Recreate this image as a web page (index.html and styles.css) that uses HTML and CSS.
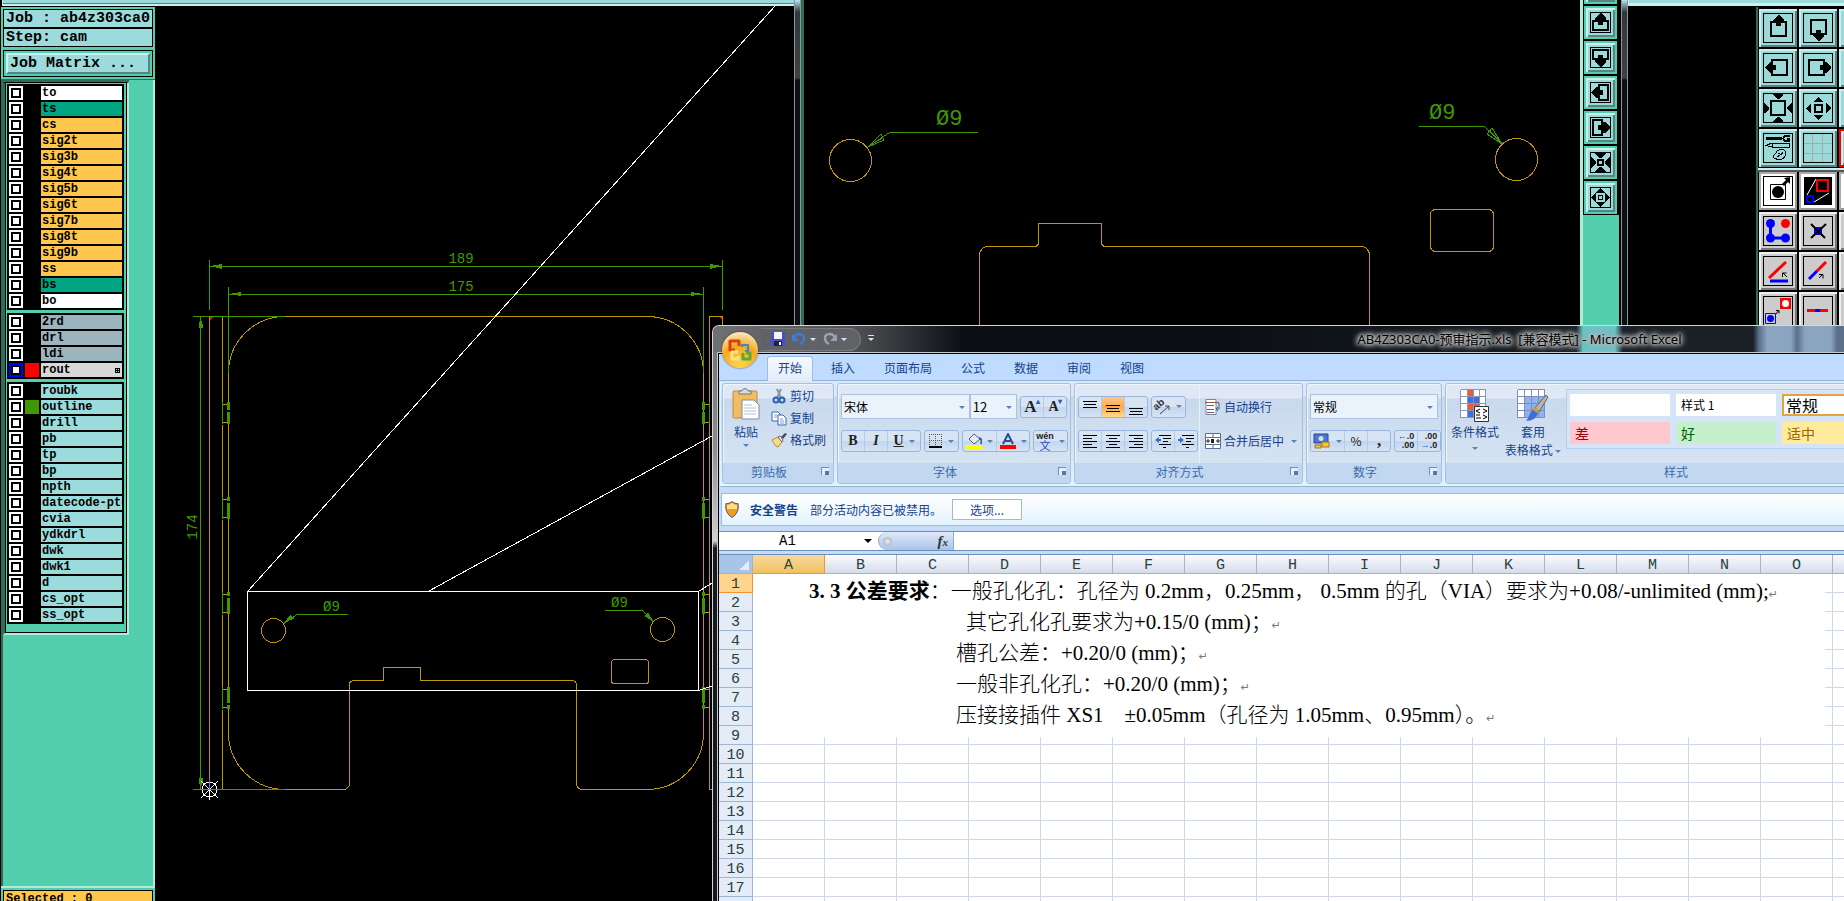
FILE: index.html
```html
<!DOCTYPE html>
<html lang="zh-CN">

<head>
    <meta charset="UTF-8">
    <meta name="viewport" content="width=device-width, initial-scale=1.0">
    <title>AB4Z303CA0-预审指示.xls - Microsoft Excel</title>
    <link rel="stylesheet" href="styles.css">
</head>

<body>
    <div class="desktop">

        <!-- Main CAM editor window -->
        <section class="cam cam-main">
            <div class="cam-strip"></div>
            <div class="cam-content">
                <aside class="job-panel">
                    <header class="job-head">
                        <div class="job-line">Job : ab4z303ca0</div>
                        <div class="job-line">Step: cam</div>
                        <div class="matrix-box">
                            <button type="button" class="matrix-btn">Job Matrix ...</button>
                        </div>
                    </header>
                    <div class="layer-area">
                        <div class="layer-list" id="layer-list">
                            <!-- Layer groups are added by the script -->
                        </div>
                    </div>
                    <footer class="job-foot">
                        <div class="selected-line">Selected : 0</div>
                    </footer>
                </aside>

                <svg class="drawing" width="639" height="895" viewBox="155 6 639 895">
                    <g class="tan">
                        <path d="M209.5 789.5V316.5H222.5V402.5M222.5 424.5V497.5M222.5 519.5V592.5M222.5 614.5V687.5M222.5 709.5V789.5" />
                        <path d="M285 316.5H647M285 316.5A56.5 56.5 0 0 0 228.5 373V402M228.5 424V497M228.5 519V592M228.5 614V687M228.5 709V733A56.5 56.5 0 0 0 285 789.5H343.5A6 6 0 0 0 349.5 783.5V684.5A4 4 0 0 1 353.5 680.5H383.5V667.5H420.5V680.5H572.5A4 4 0 0 1 576.5 684.5V783.5A6 6 0 0 0 582.5 789.5H647A56.5 56.5 0 0 0 703.5 733V373A56.5 56.5 0 0 0 647 316.5" />
                        <path d="M722.5 325V316.5H709.5V789.5H712" />
                        <path d="M222 402v2h6v-2M222 424v-2h6v2M222 497v2h6v-2M222 519v-2h6v2M222 592v2h6v-2M222 614v-2h6v2M222 687v2h6v-2M222 709v-2h6v2" />
                        <path d="M704 404h5v-2M704 422h5v2M704 499h5v-2M704 517h5v2M704 594h5v-2M704 612h5v2M704 689h5v-2M704 707h5v2" />
                        <circle cx="273.5" cy="630.5" r="12" />
                        <circle cx="662.5" cy="629.5" r="12" />
                        <rect x="611.5" y="659.5" width="37" height="24" rx="3" />
                    </g>
                    <g class="green">
                        <path d="M209.5 260V310M722.5 260V310M209.5 266.5H722.5M228.5 287V373M703.5 287V373M228.5 294.5H703.5" />
                        <path d="M193 316.5H285M193 789.5H285M200.5 316.5V789.5" />
                        <path d="M222.5 402V424M222.5 497V519M222.5 592V614M222.5 687V709M709.5 402V424M709.5 497V519" />
                        <path d="M347.5 614.5H297L284 623.5M605 610.5H642.5L653 621.5" />
                        <path class="arrow" d="M210 266l12-2v5zM722 266l-12-2v5zM229 294l12-2v4zM703 294l-12-2v4zM200.5 317l-2 11h5zM200.5 789l-2-11h5zM284 623l6-8 5 3zM653 621l-9-5 4-4z" />
                        <path class="tab" d="M228.5 402v8m0 2v12M228.5 497v4m0 2v16M228.5 592v4m0 2v16M228.5 687v16m0 2v4M703.5 402v8m0 2v12M703.5 497v4m0 2v16M703.5 592v4m0 2v16M703.5 687v16m0 2v4" />
                    </g>
                    <g class="white">
                        <rect x="247.5" y="591.5" width="451" height="99" />
                        <path d="M247.5 591.5L775 6M428 591.5L712 436M698.5 591.5L712 583M698.5 690.5L712 686" />
                        <circle cx="209.5" cy="789.5" r="7.5" />
                        <path d="M209.5 779V800M201 781L218 798M218 781L201 798" />
                    </g>
                    <path class="axis" d="M199 789.5H219M209.5 779V789" />
                    <path class="red-dot" d="M210 317h3l-3 3zM722 317h-3l3 3z" />
                    <g class="dim">
                        <text x="461" y="263" text-anchor="middle">189</text>
                        <text x="461" y="291" text-anchor="middle">175</text>
                        <text transform="translate(197 527) rotate(-90)" text-anchor="middle">174</text>
                        <text x="323" y="611">Ø9</text>
                        <text x="611" y="607">Ø9</text>
                    </g>
                </svg>
            </div>
        </section>

        <!-- Zoomed CAM window -->
        <section class="cam cam-zoom">
            <div class="glass-edge"></div>
            <div class="shade-edge"></div>
            <div class="canvas">
                <svg class="drawing" width="776" height="330" viewBox="804 0 776 330">
                    <g class="tan">
                        <circle cx="850.5" cy="160.5" r="21" />
                        <circle cx="1516.5" cy="159.5" r="21" />
                        <rect x="1430.5" y="209.5" width="63" height="42" rx="5" />
                        <path d="M979.5 330V256A8 9 0 0 1 987.5 246.5H1036L1038.5 244V223.5H1101.5V244L1104 246.5H1361A8 9 0 0 1 1369.5 256V330" />
                    </g>
                    <g class="green">
                        <path d="M978 132.5H889.5L868 147M1419 126.5H1484.5L1502 144" />
                        <path d="M868 147L881 134L884 140zM868 147L882 138M1502 144L1487 134L1492 128zM1502 144L1490 131" />
                    </g>
                    <g class="dim dim-large">
                        <text x="936" y="125">Ø9</text>
                        <text x="1429" y="119">Ø9</text>
                    </g>
                </svg>
            </div>
            <div class="side-tools">
                <button type="button" class="side-btn" aria-label="blank"></button>
                <button type="button" class="side-btn" aria-label="pan up"><svg viewBox="0 0 21 21"><path class="ol" d="M3 9h15v9H3z" /><path d="M10 1h1l5 5v3h-3v4H8V9H5V6z" /></svg></button>
                <button type="button" class="side-btn" aria-label="pan down"><svg viewBox="0 0 21 21"><path class="ol" d="M3 3h15v9H3z" /><path d="M10 20h1l5-5v-3h-3V8H8v4H5v3z" /></svg></button>
                <button type="button" class="side-btn" aria-label="pan left"><svg viewBox="0 0 21 21"><path class="ol" d="M9 3h9v15H9z" /><path d="M1 10v1l5 5h3v-3h4V8H9V5H6z" /></svg></button>
                <button type="button" class="side-btn" aria-label="pan right"><svg viewBox="0 0 21 21"><path class="ol" d="M3 3h9v15H3z" /><path d="M20 10v1l-5 5h-3v-3H8V8h4V5h3z" /></svg></button>
                <button type="button" class="side-btn" aria-label="zoom out"><svg viewBox="0 0 21 21"><path class="ol" d="M8 8h5v5H8z" /><path d="M5 1h11v1l-5 4h-1L5 2zM5 20h11v-1l-5-4h-1l-5 4zM1 5v11h1l4-5v-1L2 5zM20 5v11h-1l-4-5v-1l4-5z" /></svg></button>
                <button type="button" class="side-btn" aria-label="zoom in"><svg viewBox="0 0 21 21"><path class="thin" d="M8.5 8.5h4v4h-4z" /><path d="M6 6h9l-4-5h-1zM6 15h9l-4 5h-1zM6 6v9l-5-4v-1zM15 6v9l5-4v-1z" /></svg></button>
            </div>
        </section>

        <!-- Tool palette window -->
        <section class="cam cam-tools">
            <div class="glass-edge"></div>
            <div class="tools-main">
                <div class="cam-strip plain"></div>
                <div class="palette-wrap">
                    <div class="palette">
                        <button type="button" class="tool" aria-label="pan up"><svg viewBox="0 0 30 30"><path class="ol" d="M8 9h15v14H8z" /><path d="M15 2h1l5 5v3h-3v3h-5v-3h-3V7z" /></svg></button>
                        <button type="button" class="tool" aria-label="pan down"><svg viewBox="0 0 30 30"><path class="ol" d="M8 7h15v14H8z" /><path d="M15 28h1l5-5v-3h-3v-3h-5v3h-3v3z" /></svg></button>
                        <button type="button" class="tool" aria-label="add"></button>
                        <button type="button" class="tool" aria-label="pan left"><svg viewBox="0 0 30 30"><path class="ol" d="M9 7h15v15H9z" /><path d="M2 14v1l5 5h3v-3h3v-5h-3V9H7z" /></svg></button>
                        <button type="button" class="tool" aria-label="pan right"><svg viewBox="0 0 30 30"><path class="ol" d="M6 7h15v15H6z" /><path d="M28 14v1l-5 5h-3v-3h-3v-5h3V9h3z" /></svg></button>
                        <button type="button" class="tool" aria-label="home"></button>
                        <button type="button" class="tool" aria-label="zoom out"><svg viewBox="0 0 30 30"><path class="ol" d="M8 8h14v14H8z" /><path d="M10 1h10v1l-4 4h-1l-5-4zM10 29h10v-1l-4-4h-1l-5 4zM1 10v10h1l4-4v-1l-4-5zM29 10v10h-1l-4-4v-1l4-5z" /></svg></button>
                        <button type="button" class="tool" aria-label="zoom in"><svg viewBox="0 0 30 30"><path class="ol" d="M12 12h7v7h-7z" /><path d="M10 9h10l-4-5h-1zM10 22h10l-4 5h-1zM8 10v10l-5-4v-1zM23 10v10l5-4v-1z" /></svg></button>
                        <button type="button" class="tool" aria-label="fit"></button>
                        <button type="button" class="tool" aria-label="settings"><svg viewBox="0 0 30 30"><path d="M3 4h16v3H3z" /><path class="ol" d="M27 3h-5l-2 2.5 2 2.5h5M24 5.5h3" /><path class="thin" d="M3 12.5l6-2.500h17v4H9zM9 10v4M12 26c-2-2-2-4 0-5s1-4 4-4 7-1 7 3-4 7-7 7-2-2-4-1zM15 20h2M19 19h1M14 24l6-4" /></svg></button>
                        <button type="button" class="tool" aria-label="grid"><svg viewBox="0 0 30 30"><path class="grid-lines" d="M9.5 1v28M19.5 1v28M1 10.5h28M1 20.5h28" /></svg></button>
                        <button type="button" class="tool tool-red" aria-label="stop"></button>
                    </div>
                    <div class="palette palette-gray">
                        <button type="button" class="tool lit" aria-label="measure pad"><svg viewBox="0 0 30 30"><path class="thin" d="M7.5 8.5h15v15h-15z" /><circle cx="15" cy="16" r="6" /><path d="M27 1v7l-2-2-4 4-2-2 4-4-2-2z" /></svg></button>
                        <button type="button" class="tool lit dark" aria-label="window select"><svg viewBox="0 0 30 30"><path class="w1" d="M13 3L4 19M26 17L11 26" /><path class="r2" d="M14 4h11v11H14z" /><path class="b2" d="M4 20h6v6H4z" /></svg></button>
                        <button type="button" class="tool lit" aria-label="select"></button>
                        <button type="button" class="tool" aria-label="net"><svg viewBox="0 0 30 30"><path class="b3" d="M7.5 7v15h15" /><circle class="fb" cx="7.5" cy="7.5" r="4.500" /><circle class="fb" cx="7.5" cy="22" r="4.500" /><circle class="fb" cx="22.5" cy="22" r="4.500" /><circle class="fr" cx="22.5" cy="7.5" r="4.500" /></svg></button>
                        <button type="button" class="tool" aria-label="delete point"><svg viewBox="0 0 30 30"><path class="fb" d="M11 11h8v8h-8z" /><path class="ol" d="M8 8l14 14M23 8L8 22" /></svg></button>
                        <button type="button" class="tool" aria-label="copy"></button>
                        <button type="button" class="tool" aria-label="angle"><svg viewBox="0 0 30 30"><path class="r3" d="M6 22L23 6" /><path class="b3" d="M7 25h18" /><path class="thin" d="M19.5 21v-4h4M20 17l4 4" /></svg></button>
                        <button type="button" class="tool" aria-label="split line"><svg viewBox="0 0 30 30"><path class="r3" d="M14 15l9-9" /><path class="b3" d="M6 23l8-8" /><path class="thin" d="M16 18.5h4v4M20 18l-4 4" /></svg></button>
                        <button type="button" class="tool" aria-label="join"></button>
                        <button type="button" class="tool" aria-label="replace pad"><svg viewBox="0 0 30 30"><path class="fr" d="M17 2h11v11H17z" /><circle class="fw" cx="22.5" cy="7.5" r="3.500" /><path class="b1" d="M2.5 17.5h10v10h-10z" /><circle class="fb" cx="7.5" cy="22.5" r="3.500" /><path class="thin" d="M13 14.5h3v3M16 14l-3 4" /></svg></button>
                        <button type="button" class="tool" aria-label="break line"><svg viewBox="0 0 30 30"><path class="r3" d="M4 14.5h21" /><path class="b3" d="M12 14.5h5" /></svg></button>
                        <button type="button" class="tool" aria-label="trim"></button>
                    </div>
                </div>
            </div>
        </section>

        <!-- Excel window, hangs off the right side of the desktop -->
        <section class="excel">
            <header class="titlebar">
                <div class="quick-bar">
                    <button type="button" class="qa" aria-label="保存"><svg width="14" height="14" viewBox="0 0 14 14"><path d="M0 0h13l1 1v13H0z" fill="#4a4fc0" /><path d="M3 0h8v7H3z" fill="#f2f4ff" /><path d="M3 9h8v5H3z" fill="#1a2350" /><path d="M8 10h2v3H8z" fill="#fff" /></svg></button>
                    <button type="button" class="qa" aria-label="撤消"><svg width="14" height="14" viewBox="0 0 14 14"><path d="M2 5c3-4 10-4 10 1 0 3-2 5-4 6" fill="none" stroke="#3d7bd8" stroke-width="2.500" /><path d="M0 2v7h7z" fill="#3d7bd8" /></svg><i class="caret pale"></i></button>
                    <button type="button" class="qa" aria-label="恢复"><svg width="14" height="14" viewBox="0 0 14 14"><path d="M12 5C9 1 2 1 2 6c0 3 2 5 4 6" fill="none" stroke="#98a2b0" stroke-width="2.500" /><path d="M14 2v7H7z" fill="#98a2b0" /></svg><i class="caret pale"></i></button>
                </div>
                <button type="button" class="qa-more" aria-label="自定义快速访问工具栏"><i class="caret pale"></i></button>
                <h1 class="title">AB4Z303CA0-预审指示.xls&nbsp; [兼容模式] - Microsoft Excel</h1>
            </header>
            <button type="button" class="office-btn" aria-label="Office 按钮">
                <svg width="24" height="24" viewBox="0 0 24 24" fill="none" stroke-linejoin="round">
                    <path d="M11 8V3H2v9h5" stroke="#d8400c" stroke-width="3" />
                    <path d="M14 9V7h6v6h-3" stroke="#3a87d0" stroke-width="2" />
                    <path d="M10 14H4v7h6v-3" stroke="#fbe08a" stroke-width="3" />
                    <path d="M15 15v6h7v-6h-4" stroke="#59a83c" stroke-width="3" />
                </svg>
            </button>

            <div class="client">
                <nav class="tabs">
                    <a href="#home" class="tab-link active">开始</a>
                    <a href="#insert" class="tab-link">插入</a>
                    <a href="#layout" class="tab-link">页面布局</a>
                    <a href="#formula" class="tab-link">公式</a>
                    <a href="#data" class="tab-link">数据</a>
                    <a href="#review" class="tab-link">审阅</a>
                    <a href="#view" class="tab-link">视图</a>
                </nav>

                <div class="ribbon">
                    <div class="group group-clip">
                        <div class="group-body clip-body">
                            <button type="button" class="big-btn">
                                <svg width="28" height="32" viewBox="0 0 28 32"><rect x="1" y="3" width="24" height="27" rx="1" fill="#f2bd62" stroke="#c08a3c" /><path d="M7 6V3h3c0-3 6-3 6 0h3v3z" fill="#d9dde2" stroke="#6c7480" /><path d="M10 12h12l5 5v14H10z" fill="#fff" stroke="#7e8ca6" /><path d="M12 17h8M12 20h12M12 23h12M12 26h12" stroke="#b6c2d6" /></svg>
                                <span>粘贴</span>
                                <i class="caret"></i>
                            </button>
                            <div class="clip-list">
                                <button type="button" class="text-btn"><svg width="16" height="16" viewBox="0 0 16 16" fill="none"><path d="M6 1l4 9M10 1L6 10" stroke="#8a94a6" stroke-width="2" /><circle cx="5" cy="12" r="2.500" stroke="#2f5fb0" stroke-width="2" /><circle cx="11" cy="12" r="2.500" stroke="#2f5fb0" stroke-width="2" /></svg>剪切</button>
                                <button type="button" class="text-btn"><svg width="16" height="16" viewBox="0 0 16 16" fill="#fff" stroke="#3d66a8"><path d="M1 2h6l2 2v7H1z" /><path d="M7 5h5l3 3v7H7z" /><path d="M3 5h3M3 7h3M9 9h3M9 11h4M9 13h4" stroke="#7da0d8" /></svg>复制</button>
                                <button type="button" class="text-btn"><svg width="16" height="16" viewBox="0 0 16 16"><path d="M1 8l6-3 4 5-4 5c-3-1-4-3-6-7z" fill="#f4dc8a" stroke="#b08c30" /><path d="M7 5l2-1 3 4-1 2z" fill="#fff" stroke="#666" /><path d="M10 5l4-4 2 1-4 5z" fill="#4d4466" /></svg>格式刷</button>
                            </div>
                        </div>
                        <div class="group-label">剪贴板<i class="launcher"></i></div>
                    </div>

                    <div class="group group-font">
                        <div class="group-body">
                            <div class="row">
                                <div class="combo combo-font"><select aria-label="字体"><option>宋体</option></select><i class="caret"></i></div>
                                <div class="combo combo-size"><select aria-label="字号"><option>12</option></select><i class="caret"></i></div>
                                <div class="btn-set push">
                                    <button type="button" class="rb serif big">A<sup>▴</sup></button>
                                    <button type="button" class="rb serif">A<sup>▾</sup></button>
                                </div>
                            </div>
                            <div class="row">
                                <div class="btn-set">
                                    <button type="button" class="rb serif">B</button>
                                    <button type="button" class="rb serif italic">I</button>
                                    <button type="button" class="rb serif wide"><u>U</u><i class="caret"></i></button>
                                </div>
                                <div class="btn-set">
                                    <button type="button" class="rb wide" aria-label="边框"><svg width="14" height="14" viewBox="0 0 14 14"><path class="dots" d="M.5 0v13M6.5 0v13M12.5 0v13M0 .5h13M0 6.5h13" /><path d="M0 12h13v2H0z" /></svg><i class="caret"></i></button>
                                </div>
                                <div class="btn-set">
                                    <button type="button" class="rb wide" aria-label="填充颜色"><svg width="16" height="16" viewBox="0 0 16 16"><path d="M3 6l5-5 6 5-6 5z" fill="#e8edf4" stroke="#56606e" /><path d="M13 5c3 1 3 4 2 6" stroke="#2f5fb0" stroke-width="2" fill="none" /><path d="M0 12h16v4H0z" fill="#ff0" /></svg><i class="caret"></i></button>
                                    <button type="button" class="rb wide" aria-label="字体颜色"><svg width="16" height="16" viewBox="0 0 16 16"><path d="M3 11L8 1l5 10M5 8h6" stroke="#2b4f94" stroke-width="2" fill="none" /><path d="M0 12h16v4H0z" fill="#f00" /></svg><i class="caret"></i></button>
                                </div>
                                <div class="btn-set">
                                    <button type="button" class="rb wide"><span class="pinyin">wén<b>文</b></span><i class="caret"></i></button>
                                </div>
                            </div>
                        </div>
                        <div class="group-label">字体<i class="launcher"></i></div>
                    </div>

                    <div class="group group-align">
                        <div class="align-body">
                            <div class="group-body">
                                <div class="row">
                                    <div class="btn-set">
                                        <button type="button" class="rb" aria-label="顶端对齐"><svg width="14" height="16" viewBox="0 0 14 16"><path class="bar" d="M0 2.5h14M1 5.5h12M0 8.5h14" /></svg></button>
                                        <button type="button" class="rb on" aria-label="垂直居中"><svg width="14" height="16" viewBox="0 0 14 16"><path class="bar" d="M0 6.5h14M1 9.5h12M0 12.5h14" /></svg></button>
                                        <button type="button" class="rb" aria-label="底端对齐"><svg width="14" height="16" viewBox="0 0 14 16"><path class="bar" d="M0 9.5h14M1 12.5h12M0 15.5h14" /></svg></button>
                                    </div>
                                    <div class="btn-set">
                                        <button type="button" class="rb wide" aria-label="方向"><svg class="orient" width="16" height="16" viewBox="0 0 16 16"><path d="M5 15L14 7M10 7h4v4" stroke="#444" fill="none" /><text x="1" y="11" transform="rotate(-40 2 11)">ab</text></svg><i class="caret"></i></button>
                                    </div>
                                </div>
                                <div class="row">
                                    <div class="btn-set">
                                        <button type="button" class="rb" aria-label="左对齐"><svg width="14" height="14" viewBox="0 0 14 14"><path class="bar" d="M0 1.5h14M0 4.5h9M0 7.5h14M0 10.5h9M0 13.5h14" /></svg></button>
                                        <button type="button" class="rb" aria-label="居中"><svg width="14" height="14" viewBox="0 0 14 14"><path class="bar" d="M0 1.5h14M3 4.5h8M0 7.5h14M3 10.5h8M0 13.5h14" /></svg></button>
                                        <button type="button" class="rb" aria-label="右对齐"><svg width="14" height="14" viewBox="0 0 14 14"><path class="bar" d="M0 1.5h14M5 4.5h9M0 7.5h14M5 10.5h9M0 13.5h14" /></svg></button>
                                    </div>
                                    <div class="btn-set">
                                        <button type="button" class="rb" aria-label="减少缩进"><svg width="16" height="14" viewBox="0 0 16 14"><path class="bar" d="M4 1.5h12M8 4.5h8M8 7.5h5M4 10.5h12M8 13.5h3" /><path d="M0 6l4-3v2h2v2H4v2z" fill="#2f6fd0" /></svg></button>
                                        <button type="button" class="rb" aria-label="增加缩进"><svg width="16" height="14" viewBox="0 0 16 14"><path class="bar" d="M4 1.5h12M8 4.5h8M8 7.5h5M4 10.5h12M8 13.5h3" /><path d="M6 6L2 3v2H0v2h2v2z" fill="#2f6fd0" /></svg></button>
                                    </div>
                                </div>
                            </div>
                            <div class="group-body wrap-body">
                                <button type="button" class="text-btn"><svg width="16" height="16" viewBox="0 0 16 16"><path d="M1 .5h10v15H1z" fill="#fff" stroke="#6d86ac" /><path d="M0 3.5h14M2 6.5h7M2 10.5h7M2 13.5h7" stroke="#8a5a44" /><path d="M14 4v6h-3m2-2l-2 2 2 2" stroke="#3b5f94" fill="none" /></svg>自动换行</button>
                                <button type="button" class="text-btn"><svg width="16" height="16" viewBox="0 0 16 16"><path d="M.5.500h15v15H.5zM.5 4.5h15M.5 11.5h15M8 0v4M8 12v4" fill="#fff" stroke="#5a7099" /><path d="M1 8h4M15 8h-4M3 6v4M13 6v4" stroke="#222" /><path d="M6 6h3v4H6z" fill="#222" /></svg>合并后居中<i class="caret"></i></button>
                            </div>
                        </div>
                        <div class="group-label">对齐方式<i class="launcher"></i></div>
                    </div>

                    <div class="group group-num">
                        <div class="group-body">
                            <div class="row">
                                <div class="combo combo-num"><select aria-label="数字格式"><option>常规</option></select><i class="caret"></i></div>
                            </div>
                            <div class="row">
                                <div class="btn-set">
                                    <button type="button" class="rb wide" aria-label="会计数字格式"><svg width="18" height="16" viewBox="0 0 18 16"><path d="M1 1h14v9H1z" fill="#4d78c8" stroke="#24468c" /><circle cx="8" cy="5.500" r="2.500" fill="#cfe0fa" /><path d="M9 9h7v5H9zM2 12h6v3H2z" fill="#f0c34a" stroke="#a87414" /></svg><i class="caret"></i></button>
                                    <button type="button" class="rb">%</button>
                                    <button type="button" class="rb serif big">,</button>
                                </div>
                                <div class="btn-set push">
                                    <button type="button" class="rb deci"><span><em>←</em>.0<br>.00</span></button>
                                    <button type="button" class="rb deci"><span>.00<br><em>→</em>.0</span></button>
                                </div>
                            </div>
                        </div>
                        <div class="group-label">数字<i class="launcher"></i></div>
                    </div>

                    <div class="group group-style">
                        <div class="style-body">
                            <button type="button" class="big-btn">
                                <svg width="30" height="34" viewBox="0 0 30 34"><path d="M1 1h25v28H1z" fill="#fff" /><path d="M7 1h6v28H7z" fill="#f0583c" /><path d="M7 8h12v6H7zM7 22h6v7H7z" fill="#3f6fd8" /><path d="M13 15h6v6h-6z" fill="#f0583c" /><path d="M1 .5h25M1 7.5h25M1 14.5h25M1 21.5h25M1 28.5h25M.5 1v28M7.5 1v28M13.5 1v28M19.5 1v28M25.5 1v28" stroke="#8797b8" /><path d="M14.5 17.5h14v15h-14z" fill="#fff" stroke="#333" /><path d="M20 20l-4 2 4 2M16 26h4M16 29h5M23 20l4 2-4 2M23 26l4 2-4 2" stroke="#000" fill="none" /></svg>
                                <span>条件格式</span>
                                <i class="caret"></i>
                            </button>
                            <button type="button" class="big-btn">
                                <svg width="32" height="34" viewBox="0 0 32 34"><path d="M1 1h27v28H1z" fill="#fff" /><path d="M7 8h21v21H7z" fill="#8fb2f0" /><path d="M1 .5h27M1 7.5h27M1 14.5h27M1 21.5h27M1 28.5h27M.5 1v28M7.5 1v28M14.5 1v28M21.5 1v28M27.5 1v28" stroke="#7d8fb8" /><path d="M29 6l2 2-9 15-5-3z" fill="#b9b3a8" stroke="#666" /><path d="M16 21l5 3c-1 5-6 8-12 8 3-3 3-8 7-11z" fill="#3f6fd0" /><path d="M15 20l5 4 2-3-4-3z" fill="#d09a40" /></svg>
                                <span>套用<br>表格格式 <i class="caret"></i></span>
                            </button>
                            <div class="gallery">
                                <button type="button" class="swatch" aria-label="样式"></button>
                                <button type="button" class="swatch">样式 1</button>
                                <button type="button" class="swatch normal">常规</button>
                                <button type="button" class="swatch bad">差</button>
                                <button type="button" class="swatch good">好</button>
                                <button type="button" class="swatch neutral">适中</button>
                            </div>
                        </div>
                        <div class="group-label">样式</div>
                    </div>
                </div>

                <div class="message-bar">
                    <svg width="14" height="17" viewBox="0 0 14 17"><path d="M7 .5c2 2 4 2 6 2 1 6-1 11-6 14C2 13.5 0 8.5 1 2.500c2 0 4 0 6-2z" fill="#f49a20" stroke="#5b4b66" /><path d="M7 2c2 1 3 2 5 2v4H2V4c2 0 3-1 5-2z" fill="#fbdf8c" /></svg>
                    <strong>安全警告</strong>
                    <span>部分活动内容已被禁用。</span>
                    <button type="button" class="option-btn">选项...</button>
                </div>

                <div class="formula-bar">
                    <div class="name-box"><input type="text" value="A1" aria-label="名称框"><i class="caret black"></i></div>
                    <button type="button" class="fx-btn"><i class="ball"></i><span>f<small>x</small></span></button>
                    <input type="text" class="formula-input" aria-label="编辑栏">
                </div>

                <div class="sheet">
                    <table id="sheet-table">
                        <thead>
                            <tr></tr>
                        </thead>
                        <tbody></tbody>
                    </table>
                    <!-- Text object pasted over the first rows -->
                    <div class="note">
                        <p class="first"><b>3. 3 公差要求</b>：一般孔化孔：孔径为 0.2mm，0.25mm， 0.5mm 的孔（VIA）要求为+0.08/-unlimited (mm);<i>↵</i></p>
                        <p class="second">其它孔化孔要求为+0.15/0 (mm)；<i>↵</i></p>
                        <p>槽孔公差：+0.20/0 (mm)；<i>↵</i></p>
                        <p>一般非孔化孔：+0.20/0 (mm)；<i>↵</i></p>
                        <p>压接接插件 XS1　±0.05mm（孔径为 1.05mm、0.95mm）。<i>↵</i></p>
                    </div>
                </div>
            </div>
        </section>
    </div>

    <script>
        // Layers of the job, one array per group: [name, row class, chip class]
        const layerGroups = [
            [['to', 'silk'], ['ts', 'mask'], ['cs', 'signal'], ['sig2t', 'signal'], ['sig3b', 'signal'],
             ['sig4t', 'signal'], ['sig5b', 'signal'], ['sig6t', 'signal'], ['sig7b', 'signal'],
             ['sig8t', 'signal'], ['sig9b', 'signal'], ['ss', 'signal'], ['bs', 'mask'], ['bo', 'silk']],
            [['2rd', 'drill'], ['drl', 'drill'], ['ldi', 'drill'], ['rout', 'rout', 'red']],
            [['roubk', 'misc'], ['outline', 'misc', 'green-chip'], ['drill', 'misc'], ['pb', 'misc'], ['tp', 'misc'],
             ['bp', 'misc'], ['npth', 'misc'], ['datecode-pte', 'misc'], ['cvia', 'misc'], ['ydkdrl', 'misc'],
             ['dwk', 'misc'], ['dwk1', 'misc'], ['d', 'misc'], ['cs_opt', 'misc'], ['ss_opt', 'misc']]
        ];

        const layerList = document.getElementById('layer-list');
        layerGroups.forEach(group => {
            const box = document.createElement('div');
            box.className = 'layer-group';
            group.forEach(([name, kind, chip]) => {
                const row = document.createElement('label');
                row.className = 'layer';

                const check = document.createElement('input');
                check.type = 'checkbox';
                if (chip === 'red') check.className = 'work';

                const chipBox = document.createElement('span');
                chipBox.className = 'chip ' + (chip || '');

                const text = document.createElement('span');
                text.className = 'layer-name ' + kind;
                text.textContent = name;

                row.append(check, chipBox, text);
                box.appendChild(row);
            });
            layerList.appendChild(box);
        });

        // Column letters and row numbers of the sheet
        const columns = 'ABCDEFGHIJKLMNOPQRST'.split('');
        const headRow = document.querySelector('#sheet-table thead tr');
        const tableBody = document.querySelector('#sheet-table tbody');

        const corner = document.createElement('th');
        corner.className = 'corner';
        headRow.appendChild(corner);
        columns.forEach(letter => {
            const th = document.createElement('th');
            th.textContent = letter;
            if (letter === 'A') th.className = 'current';
            headRow.appendChild(th);
        });

        for (let i = 1; i <= 30; i++) {
            const tr = document.createElement('tr');
            const th = document.createElement('th');
            th.textContent = i;
            if (i === 1) th.className = 'current';
            tr.appendChild(th);
            columns.forEach(() => tr.appendChild(document.createElement('td')));
            tableBody.appendChild(tr);
        }
    </script>
</body>

</html>
```

FILE: styles.css
```css
* {
    margin: 0;
    padding: 0;
    box-sizing: border-box;
}

body {
    font-family: "Noto Sans CJK SC", sans-serif;
    font-size: 12px;
    line-height: 16px;
    background: #000;
    overflow: hidden;
}

button {
    font: inherit;
    color: inherit;
    background: none;
    border: none;
}

.desktop {
    position: relative;
    display: grid;
    grid-template-columns: 794fr 827fr 223fr;
    height: 100vh;
    overflow: hidden;
}

/* CAM windows */
.cam {
    display: flex;
    min-width: 0;
    overflow: hidden;
    background: #000;
}

.cam-main {
    flex-direction: column;
}

.cam-strip {
    flex: none;
    height: 6px;
    margin-left: 2px;
    border-left: 1px solid #c8f0f0;
    background: linear-gradient(#9cdada 3px, #5a8484 3px, #5a8484 4px, #c8f0f0 4px);
}

.cam-strip.plain {
    margin-left: 0;
    background: linear-gradient(#9cdada 3px, #c8f0f0 3px);
}

.cam-content {
    display: flex;
    flex: 1;
    min-height: 0;
}

.drawing {
    display: block;
    flex: none;
    shape-rendering: crispEdges;
}

.tan,
.green,
.white {
    fill: none;
    stroke-width: 1;
}

.tan {
    stroke: #c09800;
}

.green {
    stroke: #409800;
}

.green .arrow {
    fill: #409800;
    stroke: none;
}

.green .tab {
    stroke-width: 3;
}

.white {
    stroke: #fff;
}

.axis {
    stroke: #7a5cf0;
}

.red-dot {
    fill: #f00;
}

.dim {
    font-family: "Liberation Mono", monospace;
    font-size: 14px;
    fill: #409800;
}

.dim-large {
    font-size: 22px;
}

/* Left job panel */
.job-panel {
    display: flex;
    flex-direction: column;
    flex: none;
    width: 155px;
    padding: 1px 0 0 1px;
    font: bold 12px/14px "Liberation Mono", monospace;
}

.job-head {
    padding: 2px;
    background: #54cfae;
    border-bottom: 1px solid #2b6e5c;
}

.job-line {
    height: 19px;
    padding-left: 2px;
    border: 1px solid #000;
    background: #9cdbdb;
    font-size: 15px;
    line-height: 17px;
    white-space: nowrap;
}

.matrix-box {
    margin-top: 3px;
    padding: 2px;
    border: 1px solid #000;
}

.matrix-btn {
    display: block;
    width: 100%;
    height: 21px;
    padding-left: 2px;
    border: 2px solid;
    border-color: #c8f0f0 #5a8484 #5a8484 #c8f0f0;
    background: #9cdbdb;
    font-size: 15px;
    line-height: 17px;
    text-align: left;
}

.layer-area {
    flex: 1;
    min-height: 0;
    padding-top: 2px;
    border: solid #b0ecdc;
    border-width: 0 2px 2px 0;
    background: linear-gradient(#2b6e5c, #2b6e5c) 0 0 / 128px 3px no-repeat,
        linear-gradient(90deg, #2b6e5c 2px, #54cfae 2px);
}

.layer-list {
    display: flex;
    flex-direction: column;
    gap: 3px;
    width: 126px;
    padding: 1px 3px 9px 2px;
    border: solid;
    border-width: 1px 2px 2px 2px;
    border-color: #000 #b0ecdc #b0ecdc #2b6e5c;
    box-shadow: inset -1px 0 #000, inset 0 -1px #000, inset 1px 0 #000;
    margin-left: 2px;
}

.layer-group {
    display: flex;
    flex-direction: column;
    gap: 2px;
    padding: 2px;
    background: #000;
}

.layer {
    display: flex;
    gap: 2px;
    height: 14px;
}

.layer input {
    appearance: none;
    width: 14px;
    height: 14px;
    border: 2px solid #fff;
    background: #fff;
    box-shadow: inset 0 0 0 2px #000;
}

.layer input.work {
    border-color: #00f;
}

.chip {
    width: 14px;
}

.chip.red {
    background: #f00;
}

.chip.green-chip {
    background: #409800;
}

.layer-name {
    flex: 1;
    padding-left: 1px;
    overflow: hidden;
    white-space: nowrap;
}

.silk {
    background: #fff;
}

.mask {
    background: #00a480;
}

.signal {
    background: #ffc64d;
}

.drill {
    background: #9cb4be;
}

.misc {
    background: #9cdbdb;
}

.rout {
    position: relative;
    background: #d8d8d8;
}

.rout::after {
    content: "";
    position: absolute;
    right: 2px;
    top: 5px;
    box-sizing: border-box;
    width: 5px;
    height: 5px;
    border: 1px solid #000;
    background: linear-gradient(#000, #000) 1px 0 / 1px 3px no-repeat,
        linear-gradient(#000, #000) 0 1px / 3px 1px no-repeat;
}

.job-foot {
    height: 13px;
    padding: 2px 2px 0;
    background: #54cfae;
    overflow: hidden;
}

.selected-line {
    height: 20px;
    padding-left: 2px;
    border: 1px solid #000;
    background: #ffc64d;
    line-height: 16px;
}

/* Window edges */
.glass-edge {
    flex: none;
    width: 7px;
    border: solid #8c9494;
    border-width: 0 1px;
    background: linear-gradient(#b8e4f8, #30383c 12px, #404244 78px, #0c1014 80px);
}

.shade-edge {
    flex: none;
    width: 3px;
    background: #2b6e5c;
}

.canvas {
    flex: 1;
    min-width: 0;
    overflow: hidden;
}

.side-tools {
    display: flex;
    flex-direction: column;
    gap: 2px;
    flex: none;
    width: 39px;
    margin-right: 2px;
    padding: 0 1px;
    border-left: 3px solid #b0ecdc;
    background: linear-gradient(#000 215px, #54cfae 215px);
}

.side-btn {
    width: 33px;
    height: 33px;
    flex: none;
    padding: 4px;
    border: 2px solid #54cfae;
    background: #9cdada;
    box-shadow: inset 2px 2px #c8f0f0, inset -2px -2px #5a8484;
}

.side-btn:first-child {
    margin-top: -29px;
}

.side-btn svg {
    display: block;
    width: 21px;
    height: 21px;
    outline: 1px solid #000;
    outline-offset: -1px;
    shape-rendering: crispEdges;
}

.tools-main {
    display: flex;
    flex-direction: column;
    flex: 1;
    min-width: 0;
}

.palette-wrap {
    align-self: flex-end;
    flex: none;
    width: 88px;
    margin-top: 1px;
    overflow: hidden;
    border-left: 2px solid #2b6e5c;
}

.palette {
    display: grid;
    grid-template-columns: repeat(3, 38px);
    grid-auto-rows: 38px;
    gap: 2px;
    width: 120px;
    padding: 2px 1px 1px;
    border-bottom: 2px solid #c8f0f0;
    background: #000;
}

.palette-gray {
    padding-top: 0;
    border-top: 2px solid #555;
}

.tool {
    padding: 4px;
    background: #9cdada;
    box-shadow: inset 2px 2px #c8f0f0, inset -2px -2px #5a8484;
}

.palette-gray .tool {
    background: #ccc;
    box-shadow: inset 2px 2px #eee, inset -2px -2px #777;
}

.palette-gray .lit {
    background: #fff;
    box-shadow: inset 2px 2px #aaa, inset -2px -2px #999;
}

.tool-red {
    border: 2px solid #f00;
}

.tool svg {
    display: block;
    width: 30px;
    height: 30px;
    outline: 1px solid #000;
    outline-offset: -1px;
}

.palette:first-child .tool svg {
    shape-rendering: crispEdges;
}

.lit.dark svg {
    background: #000;
    outline: 1px solid #fff;
}

.ol,
.thin,
.grid-lines,
.r2,
.r3,
.b1,
.b2,
.b3,
.w1 {
    fill: none;
    stroke: #000;
    stroke-width: 2;
}

.thin,
.b1,
.w1 {
    stroke-width: 1;
}

.grid-lines {
    stroke: #aaa;
    stroke-width: 1;
}

.r2,
.r3 {
    stroke: #f00;
}

.b1,
.b2,
.b3 {
    stroke: #00f;
}

.r3,
.b3 {
    stroke-width: 3;
}

.w1 {
    stroke: #fff;
}

.fb {
    fill: #00f;
}

.fr {
    fill: #f00;
}

.fw {
    fill: #fff;
}

/* Excel window */
.excel {
    position: absolute;
    top: 325px;
    left: 712px;
    right: -318px;
    bottom: 0;
    display: flex;
    flex-direction: column;
    padding-left: 4px;
    border: solid #d4d6d8;
    border-width: 1px 0 0 1px;
    border-top-left-radius: 7px;
    background: linear-gradient(#6f7174, #8a8c8e 120px, #d0d0d0 215px, #15191d 222px);
    color: #15428b;
    overflow: hidden;
}

.titlebar {
    display: flex;
    align-items: center;
    flex: none;
    height: 26px;
    margin-left: -4px;
    padding-left: 48px;
    background: linear-gradient(90deg, transparent 863px, #6cc4c6 870px, #6cc4c6 902px, transparent 910px, transparent 1040px,
            #5b6f88 1046px, #8ba4c0 1054px, #8ba4c0 1078px, #5b6f88 1084px, #8ba4c0 1092px, #8ba4c0 1118px, #5b6f88 1124px),
        linear-gradient(90deg, #6f7174, #4a4c4f 150px, #0b0f15 250px, #0b0f15 500px, #1a2026 900px);
}

.quick-bar {
    display: flex;
    align-items: center;
    gap: 7px;
    height: 23px;
    width: 100px;
    padding-left: 10px;
    border: 1px solid #77797c;
    border-left: none;
    border-radius: 0 12px 12px 0;
    background: #606265;
}

.qa {
    display: flex;
    align-items: center;
    gap: 4px;
}

.qa-more {
    width: 12px;
    height: 12px;
    margin-left: 4px;
    display: flex;
    align-items: center;
    justify-content: center;
    background: linear-gradient(#d6e4f4, #d6e4f4) 3px 2px / 6px 1px no-repeat;
}

.title {
    flex: 1;
    color: #000;
    font: 13px/20px "Noto Sans", "Noto Sans CJK SC", sans-serif;
    text-align: center;
    text-shadow: 0 0 3px #bbb, 0 0 4px #bbb, 0 0 5px #bbb, 0 0 6px #bbb, 0 0 7px #aaa, 0 0 8px #aaa;
}

.office-btn {
    position: absolute;
    top: 6px;
    left: 9px;
    width: 36px;
    height: 36px;
    padding: 6px;
    border-radius: 50%;
    background: radial-gradient(circle at 50% 90%, #ffd94a, #f5a81c 50%, #fbe6b8 85%, #c88a20);
    box-shadow: 0 0 2px #333;
    z-index: 1;
}

.office-btn svg {
    display: block;
}

.client {
    display: flex;
    flex-direction: column;
    flex: 1;
    min-height: 0;
    border: solid #000;
    border-width: 1px 0 0 1px;
    outline: 1px solid #c8cacc;
    margin: 1px 0 0 1px;
    background: #c5dbf7;
}

.tabs {
    display: flex;
    gap: 7px;
    flex: none;
    height: 27px;
    padding: 2px 0 0 48px;
    border-bottom: 1px solid #8db2e3;
    background: #bfdbff;
}

.tab-link {
    height: 25px;
    padding: 0 11px;
    color: #15428b;
    line-height: 23px;
    text-decoration: none;
}

.tab-link.active {
    border: 1px solid #9cbde8;
    border-bottom: none;
    border-radius: 3px 3px 0 0;
    padding: 0 10px;
    background: linear-gradient(#f4f9ff, #e3edf9);
    line-height: 22px;
}

.ribbon {
    display: flex;
    gap: 3px;
    flex: none;
    height: 106px;
    margin-left: 1px;
    padding: 2px 0 0 1px;
    border-bottom: 1px solid #8fb4d0;
    border-left: 1px solid #d8f4fc;
    background: linear-gradient(#dce8f6 15px, #c8d9ee 16px, #d6e4f4 70px, #e4f4fc);
}

.group {
    display: flex;
    flex-direction: column;
    flex: none;
    height: 101px;
    border: 1px solid #a6c0e0;
    border-radius: 3px;
    box-shadow: inset 1px 1px #eef5fc;
    background: linear-gradient(#dfe9f5 14px, #c9d9ed 15px, #d9e6f4);
}

.group-clip {
    width: 112px;
}

.group-font {
    width: 234px;
}

.group-align {
    width: 229px;
}

.group-num {
    width: 136px;
}

.group-style {
    width: 462px;
}

.group-body {
    display: flex;
    flex-direction: column;
    gap: 11px;
    flex: 1;
    padding: 10px 3px 0;
}

.group-label {
    position: relative;
    height: 20px;
    padding-right: 18px;
    background: #c1d8f0;
    color: #3e6aaa;
    line-height: 18px;
    text-align: center;
}

.group-style .group-label {
    padding-right: 0;
}

.launcher {
    position: absolute;
    top: 4px;
    right: 4px;
    width: 8px;
    height: 8px;
    border: solid #6d8fbe;
    border-width: 1px 0 0 1px;
    background: linear-gradient(#5577a8, #5577a8) 3px 3px / 4px 4px no-repeat, #e4eefa;
}

.row {
    display: flex;
    align-items: center;
    gap: 3px;
    height: 22px;
}

.row:first-child {
    height: 25px;
}

.push {
    margin-left: auto;
}

.caret {
    display: inline-block;
    width: 0;
    height: 0;
    border: 3px solid transparent;
    border-top-color: #5b7fb8;
    border-bottom: none;
}

.caret.pale {
    border-top-color: #d6e4f4;
}

.caret.black {
    border-width: 4px;
    border-bottom: none;
    border-top-color: #000;
}

.clip-body {
    flex-direction: row;
    gap: 5px;
    padding: 4px 3px 0;
}

.big-btn {
    display: flex;
    flex-direction: column;
    align-items: center;
    align-self: flex-start;
    width: 40px;
    line-height: 18px;
    white-space: nowrap;
}

.clip-body .big-btn {
    gap: 3px;
}

.clip-list {
    display: flex;
    flex-direction: column;
    margin-top: -3px;
}

.text-btn {
    display: flex;
    align-items: center;
    gap: 3px;
    height: 22px;
    line-height: 16px;
    white-space: nowrap;
}

.text-btn .caret {
    margin-left: 4px;
}

.combo {
    position: relative;
    height: 25px;
    border: 1px solid #abc1de;
    background: #eaf2fb;
}

.combo-font {
    width: 131px;
}

.combo-size {
    width: 48px;
    margin-left: -3px;
}

.combo-num {
    width: 128px;
}

.combo select {
    appearance: none;
    width: 100%;
    height: 100%;
    padding-left: 2px;
    border: none;
    background: none;
    color: #000;
    font: 12px "Noto Sans CJK SC", sans-serif;
}

.combo-size select {
    font-size: 13px;
}

.combo .caret {
    position: absolute;
    top: 11px;
    right: 4px;
}

.btn-set {
    display: flex;
    height: 22px;
    border: 1px solid #9ab6dc;
    border-radius: 3px;
    background: linear-gradient(#d6e4f4 50%, #c2d5ee 50%, #d4e4f6);
}

.rb {
    display: flex;
    align-items: center;
    justify-content: center;
    gap: 5px;
    width: 22px;
    height: 20px;
    color: #222;
}

.rb + .rb {
    width: 23px;
    border-left: 1px solid #b4cae6;
}

.rb.wide {
    width: 33px;
}

.rb.on {
    background: linear-gradient(#fbc88a, #ffa84c 50%, #ffdc8a);
}

.rb sup {
    align-self: flex-start;
    margin-left: -6px;
    color: #2b5fb0;
    font-size: 8px;
    line-height: 10px;
}

.serif {
    font: bold 14px/20px "Liberation Serif", serif;
}

.serif.big {
    font-size: 17px;
}

.italic {
    font-style: italic;
}

.deci {
    font: bold 9px/9px "Liberation Sans", sans-serif;
    text-align: right;
}

.deci em {
    color: #1f5fd0;
    font-style: normal;
}

.pinyin {
    font: bold 9px/8px "Liberation Sans", sans-serif;
}

.pinyin b {
    display: block;
    color: #2a4fc0;
    font: 11px/11px "Noto Sans CJK SC", sans-serif;
}

.orient {
    overflow: visible;
}

.orient text {
    font: bold 10px "Liberation Sans", sans-serif;
    fill: #333;
}

.dots {
    fill: none;
    stroke: #555;
    stroke-dasharray: 1 1;
}

.bar {
    stroke: #000;
    stroke-width: 1;
    shape-rendering: crispEdges;
}

.align-body {
    display: flex;
    flex: 1;
}

.align-body .group-body {
    flex: none;
    padding-right: 1px;
}

.align-body .wrap-body {
    padding-left: 5px;
    border-left: 1px solid #e8f1fa;
}

.wrap-body .text-btn:first-child {
    height: 25px;
}

.style-body {
    display: flex;
    gap: 5px;
    flex: 1;
    padding: 5px 0 0 5px;
}

.style-body .big-btn {
    width: 48px;
}

.style-body .big-btn + .big-btn {
    width: 58px;
}

.big-btn .caret {
    vertical-align: middle;
}

.style-body .big-btn > .caret {
    margin-top: 6px;
}

.gallery {
    display: grid;
    grid-template-columns: repeat(3, 100px);
    grid-auto-rows: 22px;
    gap: 6px;
    flex: 1;
    height: 60px;
    margin-left: -1px;
    padding: 4px 3px;
    border: 1px solid #b4cfee;
    background: #d5e5f7;
}

.swatch {
    padding-left: 5px;
    background: #fff;
    color: #000;
    text-align: left;
}

.swatch.normal {
    border: 2px solid #e8a23c;
    padding-left: 2px;
    font-size: 16px;
}

.swatch.bad,
.swatch.good,
.swatch.neutral {
    font-size: 14px;
}

.swatch.bad {
    background: #ffc7ce;
    color: #9c0006;
}

.swatch.good {
    background: #c6efce;
    color: #006100;
}

.swatch.neutral {
    background: #ffeb9c;
    color: #9c6500;
}

.message-bar {
    display: flex;
    align-items: center;
    flex: none;
    height: 33px;
    margin: 6px 0 5px 2px;
    padding-left: 3px;
    border: 1px solid #9ebbdc;
    background: linear-gradient(#fff, #e3f3fe);
}

.message-bar strong {
    margin: 0 12px 0 11px;
}

.option-btn {
    width: 70px;
    height: 21px;
    margin-left: 10px;
    border: 1px solid #9fb8dc;
    background: #fff;
}

.formula-bar {
    display: flex;
    flex: none;
    height: 20px;
    margin-bottom: 3px;
    border: solid #6c8fb8;
    border-width: 1px 0;
    background: #fff;
}

.name-box {
    display: flex;
    align-items: center;
    width: 159px;
    padding-right: 6px;
}

.name-box input {
    flex: 1;
    min-width: 0;
    padding-right: 8px;
    border: none;
    font: 14px "Liberation Mono", monospace;
    text-align: center;
}

.fx-btn {
    display: flex;
    align-items: center;
    justify-content: space-between;
    width: 76px;
    padding: 0 5px 0 4px;
    border: 1px solid #8facd0;
    border-width: 0 1px 0 1px;
    border-radius: 9px 0 0 9px;
    background: linear-gradient(#dfeafa, #a9c3e8);
}

.fx-btn span {
    color: #333;
    font: italic bold 15px/16px "Liberation Serif", serif;
}

.fx-btn small {
    font-size: 11px;
}

.ball {
    width: 9px;
    height: 9px;
    border-radius: 50%;
    background: radial-gradient(#eee, #98a5b8);
}

.formula-input {
    flex: 1;
    border: none;
}

/* Sheet */
.sheet {
    position: relative;
    flex: 1;
    min-height: 0;
    border-top: 1px solid #6c8fb8;
    background: #fff;
    overflow: hidden;
}

#sheet-table {
    width: 1474px;
    table-layout: fixed;
    border-collapse: separate;
    border-spacing: 0;
}

#sheet-table th {
    width: 72px;
    height: 19px;
    padding-top: 3px;
    border: solid #9eb6ce;
    border-width: 0 1px 1px 0;
    color: #27413e;
    font: 15px/15px "Liberation Mono", monospace;
}

#sheet-table thead th {
    background: linear-gradient(#f9fbfd, #d5ddea);
}

#sheet-table tbody th {
    background: #e4ecf7;
}

#sheet-table td {
    border: solid #d0d7e5;
    border-width: 0 1px 1px 0;
}

#sheet-table thead .corner {
    width: 34px;
    background: linear-gradient(135deg, transparent 50%, #e4ecf7 50%) 20px 5px / 10px 10px no-repeat, #a9c4e9;
}

#sheet-table thead .current {
    border-color: #f29436;
    background: linear-gradient(#f9d99f, #f1c15f);
}

#sheet-table tbody .current {
    border-color: #f29436;
    background: #ffd58d;
}

.note {
    position: absolute;
    top: 19px;
    left: 34px;
    width: 1072px;
    height: 163px;
    padding-top: 2px;
    background: #fff;
    color: #000;
    font: 21px/31px "Liberation Serif", "Noto Sans CJK SC", serif;
    font-weight: 300;
    white-space: nowrap;
}

.note p {
    height: 31px;
    padding-left: 203px;
}

.note .first {
    padding-left: 56px;
}

.note .second {
    padding-left: 213px;
}

.note b {
    font-weight: 700;
}

.note i {
    color: #777;
    font: 11px/11px "DejaVu Sans", sans-serif;
}
```
